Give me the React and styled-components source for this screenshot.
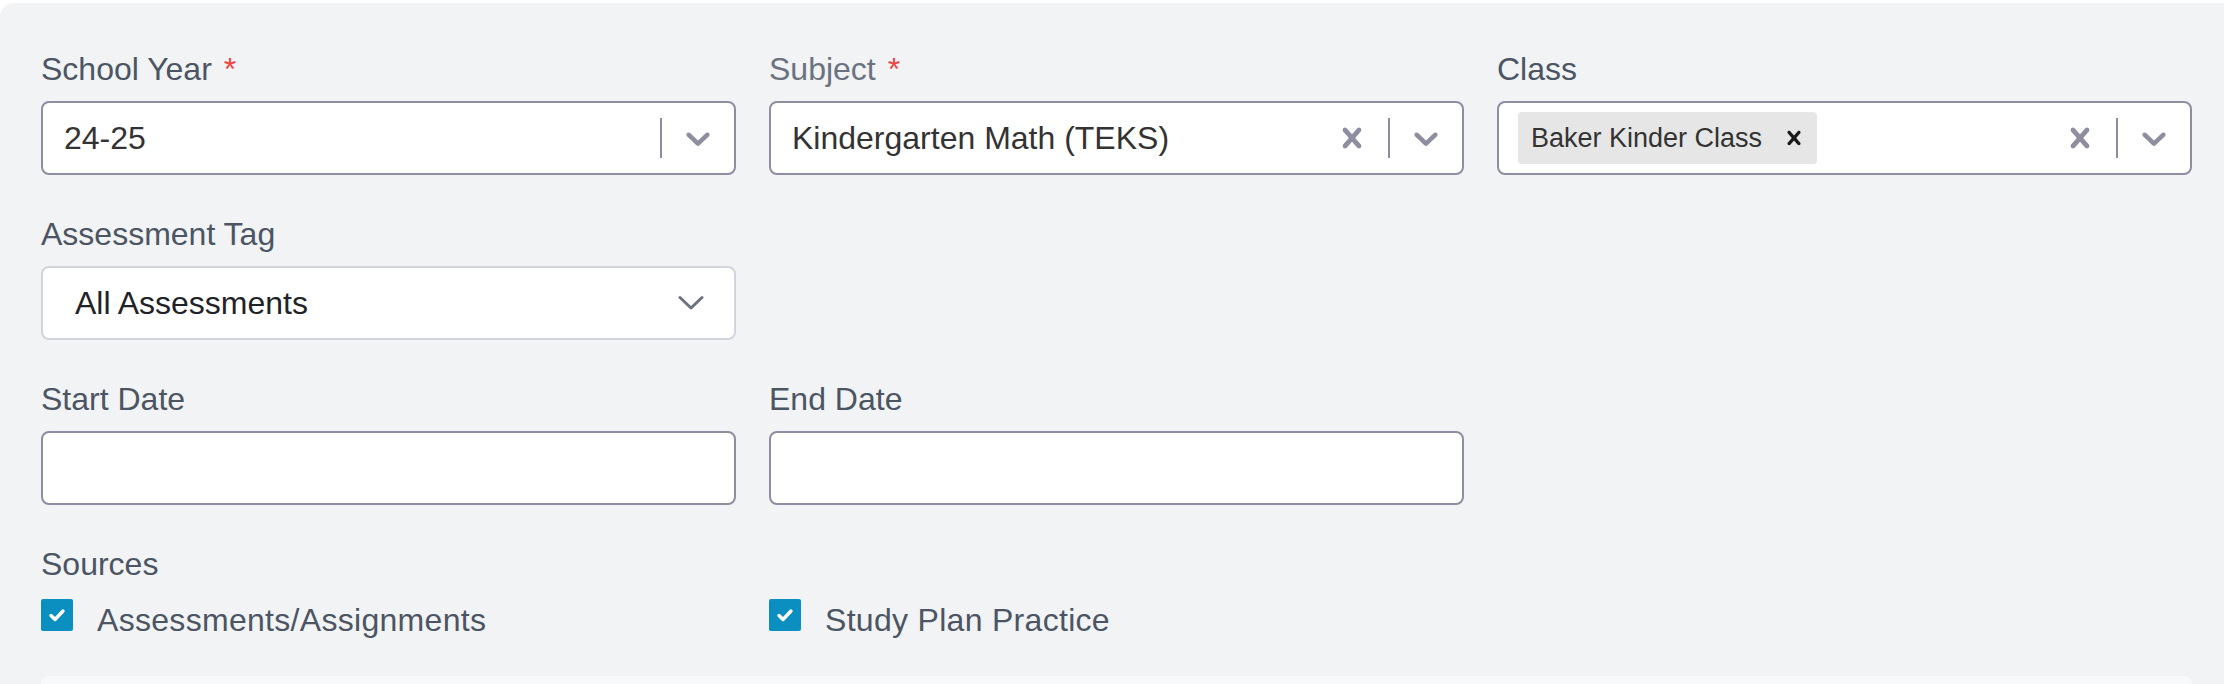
import React from "react";
import styled, { createGlobalStyle } from "styled-components";

const GlobalStyle = createGlobalStyle`
  html, body {
    margin: 0;
    padding: 0;
    background: #ffffff;
    font-family: "Liberation Sans", Arial, sans-serif;
    overflow: hidden;
  }
  * { box-sizing: border-box; }
`;

const Panel = styled.div`
  margin-top: 3px;
  background: #f2f3f5;
  border-top-left-radius: 14px;
  padding: 42px 32px 0 41px;
`;

const FormGrid = styled.div`
  display: grid;
  grid-template-columns: repeat(3, 695px);
  column-gap: 33px;
  row-gap: 35px;
`;

const Field = styled.div`
  display: flex;
  flex-direction: column;
  grid-column: ${({ $span }) => ($span ? "1 / -1" : "auto")};
`;

const Label = styled.label`
  font-size: 32px;
  line-height: 48px;
  margin-bottom: 8px;
  color: ${({ $muted }) => ($muted ? "#6b7280" : "#4b5563")};
`;

const Required = styled.span`
  color: #ef4444;
  margin-left: 12px;
`;

const Control = styled.div`
  height: 74px;
  display: flex;
  align-items: center;
  background: #ffffff;
  border: 2px solid ${({ $light }) => ($light ? "#d1d5db" : "#8e8ea0")};
  border-radius: 8px;
`;

const ValueArea = styled.div`
  flex: 1;
  display: flex;
  align-items: center;
  padding-left: ${({ $pad }) => $pad || 21}px;
  font-size: 32px;
  color: ${({ $dark }) => ($dark ? "#1f2328" : "#333333")};
  white-space: nowrap;
  overflow: hidden;
`;

const Chip = styled.div`
  display: flex;
  align-items: center;
  height: 52px;
  background: #e6e6e6;
  border-radius: 4px;
  margin-left: -1px;
`;

const ChipLabel = styled.span`
  font-size: 27px;
  color: #333333;
  padding: 0 10px 0 13px;
`;

const ChipRemove = styled.span`
  display: flex;
  align-items: center;
  padding: 0 9px 0 8px;
  color: #1a1a1a;
`;

const Indicator = styled.div`
  width: 72px;
  height: 70px;
  display: flex;
  align-items: center;
  justify-content: center;
  color: #8e8ea0;
`;

const Separator = styled.span`
  width: 2px;
  height: 40px;
  background: #8e8ea0;
`;

const PlainChevron = styled.div`
  display: flex;
  align-items: center;
  margin-right: 30px;
  color: #6b7280;
`;

const DateInput = styled.input`
  height: 74px;
  width: 100%;
  background: #ffffff;
  border: 2px solid #8e8ea0;
  border-radius: 8px;
  font-size: 32px;
  padding: 0 20px;
  outline: none;
`;

const SourcesGrid = styled.div`
  display: grid;
  grid-template-columns: repeat(3, 695px);
  column-gap: 33px;
`;

const CheckRow = styled.div`
  display: flex;
  align-items: flex-start;
  height: 48px;
  font-size: 32px;
  line-height: 48px;
  letter-spacing: 0.3px;
  color: #4b5563;
`;

const CheckBox = styled.span`
  width: 32px;
  height: 32px;
  margin-top: 3px;
  margin-right: 24px;
  background: #0a8fc0;
  border-radius: 2px;
  display: flex;
  align-items: center;
  justify-content: center;
`;

const NextCard = styled.div`
  margin-top: 32px;
  height: 8px;
  background: #f8f9fa;
  border-top-left-radius: 14px;
  border-top-right-radius: 14px;
`;

const crossPath =
  "M14.348 14.849c-0.469 0.469-1.229 0.469-1.697 0l-2.651-3.030-2.651 3.029c-0.469 0.469-1.229 0.469-1.697 0-0.469-0.469-0.469-1.229 0-1.697l2.758-3.15-2.759-3.152c-0.469-0.469-0.469-1.228 0-1.697s1.228-0.469 1.697 0l2.652 3.031 2.651-3.031c0.469-0.469 1.228-0.469 1.697 0s0.469 1.229 0 1.697l-2.758 3.152 2.758 3.15c0.469 0.469 0.469 1.229 0 1.698z";
const chevronPath =
  "M4.516 7.548c0.436-0.446 1.043-0.481 1.576 0l3.908 3.747 3.908-3.747c0.533-0.481 1.141-0.446 1.574 0 0.436 0.445 0.408 1.197 0 1.615-0.406 0.418-4.695 4.502-4.695 4.502-0.217 0.223-0.502 0.335-0.787 0.335s-0.57-0.112-0.789-0.335c0 0-4.287-4.084-4.695-4.502s-0.436-1.17 0-1.615z";

const Cross = ({ size = 40 }) => (
  <svg width={size} height={size} viewBox="0 0 20 20" fill="currentColor">
    <path d={crossPath} />
  </svg>
);

const Chevron = () => (
  <svg width="40" height="40" viewBox="0 0 20 20" fill="currentColor">
    <path d={chevronPath} />
  </svg>
);

const Select = ({ children, clearable }) => (
  <Control>
    {children}
    {clearable && (
      <Indicator>
        <Cross />
      </Indicator>
    )}
    <Separator />
    <Indicator>
      <Chevron />
    </Indicator>
  </Control>
);

const Check = ({ label }) => (
  <CheckRow>
    <CheckBox>
      <svg width="20" height="20" viewBox="0 0 20 20">
        <path
          d="M4 10.5l4 4 8-8.5"
          fill="none"
          stroke="#fff"
          strokeWidth="3.4"
          strokeLinecap="round"
          strokeLinejoin="round"
        />
      </svg>
    </CheckBox>
    {label}
  </CheckRow>
);

export default function App() {
  return (
    <>
      <GlobalStyle />
      <Panel>
        <FormGrid>
          <Field>
            <Label>
              School Year<Required>*</Required>
            </Label>
            <Select>
              <ValueArea>24-25</ValueArea>
            </Select>
          </Field>
          <Field>
            <Label $muted>
              Subject<Required>*</Required>
            </Label>
            <Select clearable>
              <ValueArea>Kindergarten Math (TEKS)</ValueArea>
            </Select>
          </Field>
          <Field>
            <Label>Class</Label>
            <Select clearable>
              <ValueArea $pad={20}>
                <Chip>
                  <ChipLabel>Baker Kinder Class</ChipLabel>
                  <ChipRemove>
                    <Cross size={28} />
                  </ChipRemove>
                </Chip>
              </ValueArea>
            </Select>
          </Field>

          <Field>
            <Label>Assessment Tag</Label>
            <Control $light>
              <ValueArea $pad={32} $dark>
                All Assessments
              </ValueArea>
              <PlainChevron>
                <svg width="26" height="16" viewBox="0 0 26 16">
                  <path
                    d="M2 2.5l11 10.5 11-10.5"
                    fill="none"
                    stroke="currentColor"
                    strokeWidth="3"
                    strokeLinecap="round"
                    strokeLinejoin="round"
                  />
                </svg>
              </PlainChevron>
            </Control>
          </Field>
          <div />
          <div />

          <Field>
            <Label>Start Date</Label>
            <DateInput type="text" />
          </Field>
          <Field>
            <Label>End Date</Label>
            <DateInput type="text" />
          </Field>
          <div />

          <Field $span>
            <Label>Sources</Label>
            <SourcesGrid>
              <Check label="Assessments/Assignments" />
              <Check label="Study Plan Practice" />
            </SourcesGrid>
          </Field>
        </FormGrid>
        <NextCard />
      </Panel>
    </>
  );
}
